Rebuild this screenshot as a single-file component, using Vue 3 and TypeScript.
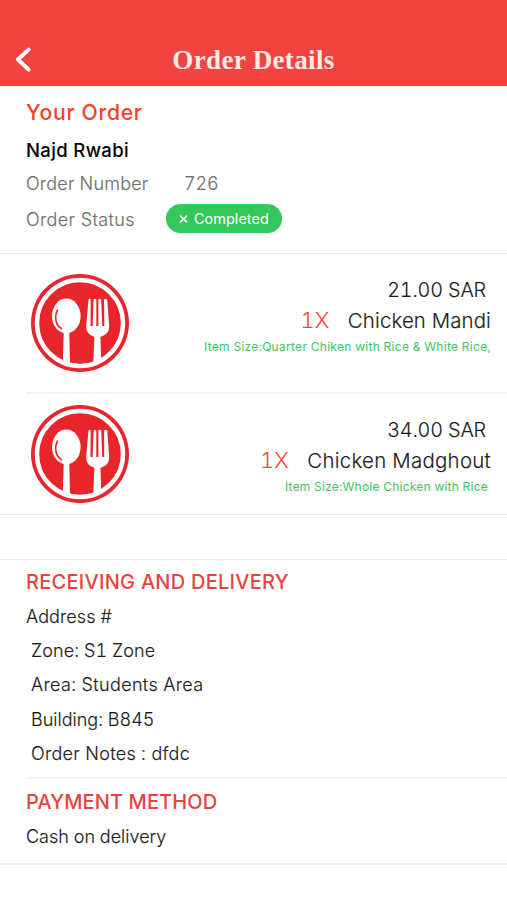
<script setup lang="ts">
interface OrderItem {
  price: string
  quantity: string
  name: string
  size: string
  kind: string
}

interface AddressLine {
  text: string
  kind: string
}

const items: OrderItem[] = [
  { price: '21.00 SAR', quantity: '1X', name: 'Chicken Mandi', size: 'Item Size:Quarter Chiken with Rice & White Rice,', kind: 'first' },
  { price: '34.00 SAR', quantity: '1X', name: 'Chicken Madghout', size: 'Item Size:Whole Chicken with Rice', kind: 'last' },
]

const address: AddressLine[] = [
  { text: 'Zone: S1 Zone', kind: 'zone' },
  { text: 'Area: Students Area', kind: 'area' },
  { text: 'Building: B845', kind: 'building' },
  { text: 'Order Notes : dfdc', kind: 'notes' },
]
</script>

<template>
  <div class="screen">
    <header class="bar">
      <svg class="back" width="20" height="28" viewBox="0 0 20 28">
        <path d="M15.6 3.6 L5 13.5 L15.6 23.6" />
      </svg>
      <h1 class="title">Order Details</h1>
      <span class="bar-end"></span>
    </header>

    <section class="summary">
      <h2 class="your-order">Your Order</h2>
      <p class="restaurant">Najd Rwabi</p>
      <p class="field number"><span class="label">Order Number</span><span class="value">726</span></p>
      <div class="field status">
        <span class="label">Order Status</span>
        <span class="pill">
          <svg width="9" height="9" viewBox="0 0 9 9"><path d="M1 1.6 L8 8.4 M8 1.6 L1 8.4" /></svg>
          <span>Completed</span>
        </span>
      </div>
    </section>

    <section class="items">
      <article v-for="item in items" :key="item.name" class="item" :class="item.kind">
        <svg class="plate" width="98" height="98" viewBox="0 0 98 98">
          <circle cx="49" cy="49" r="49" fill="#e8252b" />
          <circle cx="49" cy="49" r="43" fill="none" stroke="#fff" stroke-width="4.4" />
          <g fill="#fff">
            <ellipse cx="35.3" cy="42" rx="14.3" ry="17.4" />
            <path d="M32.8 56 H38.2 L39 91 L31.8 89 Z" />
            <path d="M57.5 25.5 Q58.6 24 59.7 25.5 L59.5 52 H61.6 L62.6 25.5 Q64 23.8 65.3 25.5 V52 H67.4 V25.5 Q68.8 23.8 70.2 25.5 L71.2 52 H73.3 L73 25.5 Q74.6 23.8 76.2 25.5 L78.2 52 Q78.5 60 69.4 63 L70.3 88 L62.2 91 L63.4 63 Q54.8 60 55.2 52 Z" />
          </g>
          <path d="M26.4 36 C23 43.5 24.7 51 30.5 54.7" fill="none" stroke="#e8252b" stroke-width="1.6" stroke-linecap="round" />
        </svg>
        <div class="details">
          <p class="price">{{ item.price }}</p>
          <p class="name"><span class="qty">{{ item.quantity }}</span><span class="dish">{{ item.name }}</span></p>
          <p class="size">{{ item.size }}</p>
        </div>
      </article>
    </section>

    <section class="info">
      <div class="delivery">
        <h3 class="heading receiving">RECEIVING AND DELIVERY</h3>
        <p class="line">Address #</p>
        <p v-for="entry in address" :key="entry.kind" class="line inset" :class="entry.kind">{{ entry.text }}</p>
      </div>
      <div class="payment">
        <h3 class="heading">PAYMENT METHOD</h3>
        <p class="line cash">Cash on delivery</p>
      </div>
    </section>
  </div>
</template>

<style>
body {
  background: #fff;
}
</style>

<style scoped>
.screen {
  width: 100%;
  height: 900px;
  box-sizing: border-box;
  overflow: hidden;
  background: #fff;
  color: #1c1c1c;
  font-family: Inter, "Liberation Sans", sans-serif;
  font-variant-numeric: tabular-nums;
  white-space: nowrap;
}
h1, h2, h3, p {
  margin: 0;
  font-weight: 400;
}
.bar {
  height: 86px;
  box-sizing: border-box;
  padding: 34px 13px 0;
  display: flex;
  align-items: center;
  justify-content: space-between;
  background: #f14440;
}
.back path {
  fill: none;
  stroke: #fff;
  stroke-width: 4;
  stroke-linejoin: round;
  stroke-linecap: round;
}
.title {
  font-family: "Liberation Serif", "Times New Roman", serif;
  font-size: 27px;
  font-weight: 700;
  letter-spacing: 0.35px;
  color: #ffe9e3;
}
.bar-end {
  width: 20px;
}
.summary {
  height: 168px;
  box-sizing: border-box;
  padding-left: 26px;
  border-bottom: 1px solid #e9e9e9;
}
.your-order {
  padding-top: 1px;
  font-size: 21.2px;
  font-weight: 500;
  line-height: 51px;
  letter-spacing: 0.65px;
  color: #f3432b;
}
.restaurant {
  font-size: 18.5px;
  font-weight: 500;
  line-height: 25px;
  letter-spacing: 0.35px;
  color: #000;
}
.field {
  display: flex;
  color: #707070;
  font-size: 18px;
  font-weight: 300;
}
.label,
.value,
.price,
.dish,
.line {
  -webkit-text-stroke: 0.15px currentColor;
}
.number {
  line-height: 41px;
}
.number .label {
  width: 158px;
  letter-spacing: 0.2px;
}
.value {
  letter-spacing: -0.1px;
}
.status {
  height: 29px;
  line-height: 31px;
}
.status .label {
  width: 140px;
  letter-spacing: 0.38px;
}
.pill {
  width: 116px;
  height: 29px;
  box-sizing: border-box;
  padding-left: 13px;
  border-radius: 15px;
  display: flex;
  align-items: center;
  gap: 6px;
  background: #34c759;
  color: #fff;
  font-size: 14.5px;
  font-weight: 400;
  line-height: 29px;
}
.pill path {
  stroke: #fff;
  stroke-width: 1.5;
}
.item {
  display: flex;
  justify-content: space-between;
  box-sizing: border-box;
  padding-right: 16px;
}
.first {
  height: 140px;
  margin-left: 26px;
  padding-left: 5px;
  border-bottom: 2px solid #f1f1f1;
}
.last {
  height: 121px;
  padding-left: 31px;
  border-bottom: 1px solid #e9e9e9;
}
.plate {
  margin-top: 20px;
}
.last .plate {
  margin-top: 11px;
}
.details {
  padding-top: 21px;
  text-align: right;
}
.price {
  padding-right: 5px;
  font-size: 19.8px;
  font-weight: 300;
  line-height: 30px;
  letter-spacing: -0.15px;
}
.name {
  font-size: 20.4px;
  font-weight: 300;
  line-height: 30px;
}
.first .dish {
  letter-spacing: 0.15px;
}
.last .dish {
  letter-spacing: 0.3px;
}
.qty {
  margin-right: 18.5px;
  font-size: 22px;
  color: #f7473f;
}
.size {
  font-size: 12px;
  line-height: 21px;
  letter-spacing: 0.29px;
  color: #3dc562;
}
.last .size {
  padding-right: 3px;
  letter-spacing: 0.24px;
}
.info {
  margin-top: 44px;
  border-top: 1px solid #e9e9e9;
  border-bottom: 2px solid #f0f0f0;
}
.delivery {
  height: 219px;
  box-sizing: border-box;
  margin-left: 26px;
  padding-top: 4px;
  border-bottom: 2px solid #f3f3f3;
}
.payment {
  height: 84px;
  box-sizing: border-box;
  padding: 5px 0 0 26px;
}
.heading {
  font-size: 20px;
  font-weight: 500;
  line-height: 36px;
  letter-spacing: 0.1px;
  color: #e8443f;
}
.receiving {
  letter-spacing: 0.26px;
}
.line {
  font-size: 18px;
  font-weight: 300;
  line-height: 34.2px;
  letter-spacing: 0.1px;
}
.inset {
  padding-left: 5px;
}
.zone {
  letter-spacing: 0.07px;
}
.area {
  letter-spacing: 0.35px;
}
.building {
  letter-spacing: 0;
}
.notes {
  letter-spacing: 0.3px;
}
.cash {
  letter-spacing: 0;
}
</style>
